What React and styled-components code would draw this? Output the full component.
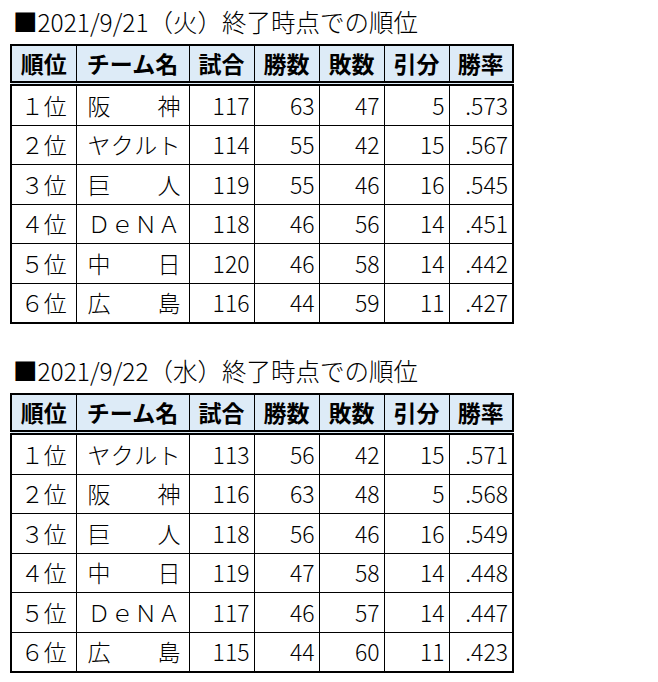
import React from "react";
import styled, { createGlobalStyle } from "styled-components";

const GlobalStyle = createGlobalStyle`
  body {
    margin: 0;
    background: #fff;
    font-family: "Noto Sans CJK JP", "Noto Sans", sans-serif;
    color: #000;
  }
`;

const Page = styled.div`
  padding-left: 10px;
`;

const Section = styled.section`
  & + & {
    margin-top: 25px;
  }
`;

const Title = styled.h2`
  margin: 0;
  height: 44px;
  line-height: 44px;
  padding-left: 3px;
  font-size: 24.5px;
  font-weight: 300;
  white-space: nowrap;
`;

const Table = styled.table`
  border-collapse: collapse;
  table-layout: fixed;
  border: 2px solid #000;
  font-size: 23px;
  font-weight: 300;
`;

const Col = styled.col`
  width: ${(p) => p.$w}px;
`;

const Th = styled.th`
  height: 35px;
  padding: 0;
  background: #ddebf7;
  font-weight: 700;
  text-align: center;
  line-height: 1;
  border-left: 1px solid #000;
  border-bottom: 5px double #000;
`;

const Td = styled.td`
  height: 38.5px;
  padding: 0 ${(p) => (p.$align === "right" ? "4px" : "0")} 0 0;
  text-align: ${(p) => p.$align || "right"};
  line-height: 1;
  border-left: 1px solid #000;
  border-top: 1px solid #000;
  white-space: nowrap;
`;

const NameCell = styled.td`
  height: 38.5px;
  padding: 0 8px 0 11px;
  border-left: 1px solid #000;
  border-top: 1px solid #000;
`;

const Spread = styled.div`
  display: flex;
  justify-content: space-between;
  line-height: 1;
`;

const columns = [
  { label: "順位", w: 65 },
  { label: "チーム名", w: 113 },
  { label: "試合", w: 65 },
  { label: "勝数", w: 65 },
  { label: "敗数", w: 65 },
  { label: "引分", w: 65 },
  { label: "勝率", w: 64 },
];

const standings = [
  {
    title: "■2021/9/21（火）終了時点での順位",
    rows: [
      ["１位", "阪神", 117, 63, 47, 5, ".573"],
      ["２位", "ヤクルト", 114, 55, 42, 15, ".567"],
      ["３位", "巨人", 119, 55, 46, 16, ".545"],
      ["４位", "ＤｅＮＡ", 118, 46, 56, 14, ".451"],
      ["５位", "中日", 120, 46, 58, 14, ".442"],
      ["６位", "広島", 116, 44, 59, 11, ".427"],
    ],
  },
  {
    title: "■2021/9/22（水）終了時点での順位",
    rows: [
      ["１位", "ヤクルト", 113, 56, 42, 15, ".571"],
      ["２位", "阪神", 116, 63, 48, 5, ".568"],
      ["３位", "巨人", 118, 56, 46, 16, ".549"],
      ["４位", "中日", 119, 47, 58, 14, ".448"],
      ["５位", "ＤｅＮＡ", 117, 46, 57, 14, ".447"],
      ["６位", "広島", 115, 44, 60, 11, ".423"],
    ],
  },
];

const Standings = ({ title, rows }) => (
  <Section>
    <Title>{title}</Title>
    <Table>
      <colgroup>
        {columns.map((c) => (
          <Col key={c.label} $w={c.w} />
        ))}
      </colgroup>
      <thead>
        <tr>
          {columns.map((c) => (
            <Th key={c.label}>{c.label}</Th>
          ))}
        </tr>
      </thead>
      <tbody>
        {rows.map(([rank, team, ...nums]) => (
          <tr key={rank}>
            <Td $align="center">{rank}</Td>
            <NameCell>
              <Spread>
                {[...team].map((ch, i) => (
                  <span key={i}>{ch}</span>
                ))}
              </Spread>
            </NameCell>
            {nums.map((n, i) => (
              <Td key={i} $align="right">
                {n}
              </Td>
            ))}
          </tr>
        ))}
      </tbody>
    </Table>
  </Section>
);

export default function App() {
  return (
    <Page>
      <GlobalStyle />
      {standings.map((s) => (
        <Standings key={s.title} {...s} />
      ))}
    </Page>
  );
}
